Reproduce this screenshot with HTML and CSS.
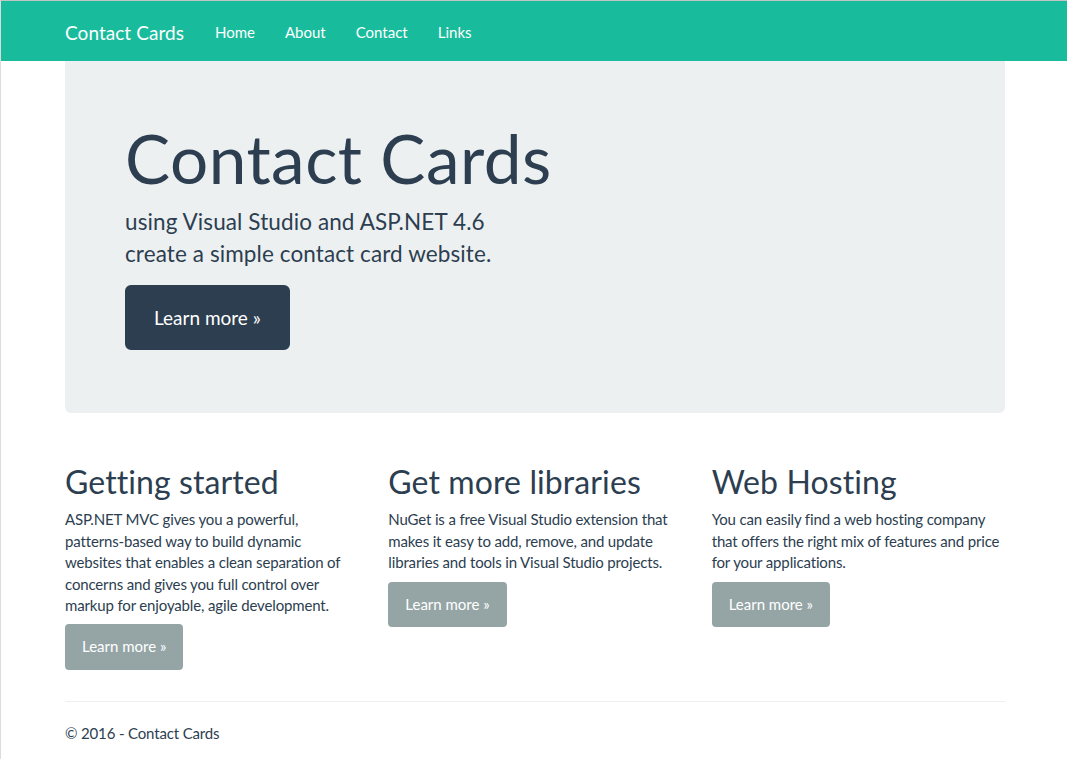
FILE: index.html
```html
<!DOCTYPE html>
<html lang="en">
<head>
<meta charset="utf-8">
<title>Contact Cards</title>
<link rel="stylesheet" href="styles.css">
</head>
<body>
<div class="page">
  <nav class="navbar">
    <div class="container nav-inner">
      <a class="brand" href="#">Contact Cards</a>
      <ul class="nav">
        <li><a href="#">Home</a></li>
        <li><a href="#">About</a></li>
        <li><a href="#">Contact</a></li>
        <li><a href="#">Links</a></li>
      </ul>
    </div>
  </nav>
  <main class="container">
    <section class="jumbotron">
      <h1>Contact Cards</h1>
      <p class="lead">using Visual Studio and ASP.NET 4.6<br>create a simple contact card website.</p>
      <p class="lead action"><a class="btn btn-primary btn-lg" href="#">Learn more &raquo;</a></p>
    </section>
    <div class="row">
      <div class="col">
        <h2>Getting started</h2>
        <p>ASP.NET MVC gives you a powerful, patterns-based way to build dynamic websites that enables a clean separation of concerns and gives you full control over markup for enjoyable, agile development.</p>
        <p class="btn-row"><a class="btn btn-default" href="#">Learn more &raquo;</a></p>
      </div>
      <div class="col">
        <h2>Get more libraries</h2>
        <p>NuGet is a free Visual Studio extension that makes it easy to add, remove, and update libraries and tools in Visual Studio projects.</p>
        <p class="btn-row"><a class="btn btn-default" href="#">Learn more &raquo;</a></p>
      </div>
      <div class="col">
        <h2>Web Hosting</h2>
        <p>You can easily find a web hosting company that offers the right mix of features and price for your applications.</p>
        <p class="btn-row"><a class="btn btn-default" href="#">Learn more &raquo;</a></p>
      </div>
    </div>
    <hr class="divider">
    <footer class="footer">
      <p>&copy; 2016 - Contact Cards</p>
    </footer>
  </main>
</div>
</body>
</html>
```

FILE: styles.css
```css
* { box-sizing: border-box; }
html, body { margin: 0; padding: 0; }
body {
  font-family: Lato, "Open Sans", "Liberation Sans", sans-serif;
  font-size: 15px;
  line-height: 1.42857143;
  color: #2c3e50;
  background: #fff;
  border-top: 1px solid #c4c4c4;
  border-left: 1px solid #dcdcdc;
  overflow: hidden;
  min-height: 100vh;
  letter-spacing: -0.15px;
}
.page { padding-left: 2px; }
a { text-decoration: none; }
p { margin: 0 0 10.75px; }

.navbar {
  background: #18bc9c;
  height: 60px;
  margin-left: -2px;
}
.container {
  width: 940px;
  margin: 0 auto;
}
.navbar .container { position: relative; left: 1px; }
.nav-inner {
  display: flex;
  align-items: center;
  height: 60px;
  letter-spacing: 0;
}
.brand {
  color: #fff;
  font-size: 19px;
  line-height: 21px;
  padding: 20.5px 15px 18.5px 0;
  letter-spacing: 0.05px;
}
.nav {
  display: flex;
  list-style: none;
  margin: 0;
  padding: 0 0 0 1px;
}
.nav a {
  display: block;
  color: #fff;
  font-size: 15px;
  line-height: 21px;
  padding: 20.5px 15px 18.5px;
}

.jumbotron {
  background: #ecf0f1;
  padding: 38px 60px 48px;
  border-radius: 0 0 6px 6px;
  margin-bottom: 29px;
}
.jumbotron h1 {
  font-size: 67.5px;
  font-weight: 400;
  line-height: 1.1;
  margin: 21.5px 0 10.75px;
  letter-spacing: 0.5px;
}
.jumbotron .lead {
  font-size: 22.5px;
  line-height: 1.42857143;
  margin-bottom: 15px;
  letter-spacing: 0.1px;
}
.jumbotron .action {
  display: flex;
  margin-bottom: 15px;
}

.btn {
  display: inline-block;
  color: #fff;
  border: 2px solid transparent;
  font-size: 15px;
  line-height: 1.42857143;
  padding: 10px 15px;
  border-radius: 4px;
  vertical-align: middle;
  letter-spacing: 0;
}
.btn-primary { background: #2c3e50; border-color: #2c3e50; }
.btn-default { background: #95a5a6; border-color: #95a5a6; }
.btn-lg {
  font-size: 19px;
  line-height: 1.3333333;
  padding: 18px 27px;
  border-radius: 6px;
}

.row {
  display: grid;
  grid-template-columns: repeat(3, 1fr);
  column-gap: 30px;
}
.col h2 {
  font-size: 32px;
  font-weight: 400;
  line-height: 1.1;
  margin: 21.5px 0 10.5px;
  letter-spacing: 0.1px;
}
.col p { margin-bottom: 8px; }
.col .btn-row {
  display: flex;
  margin-bottom: 10px;
}

.divider {
  border: 0;
  border-top: 1px solid #ecf0f1;
  margin: 21px 0;
}
.footer p { margin: 0 0 10.75px; }
```
